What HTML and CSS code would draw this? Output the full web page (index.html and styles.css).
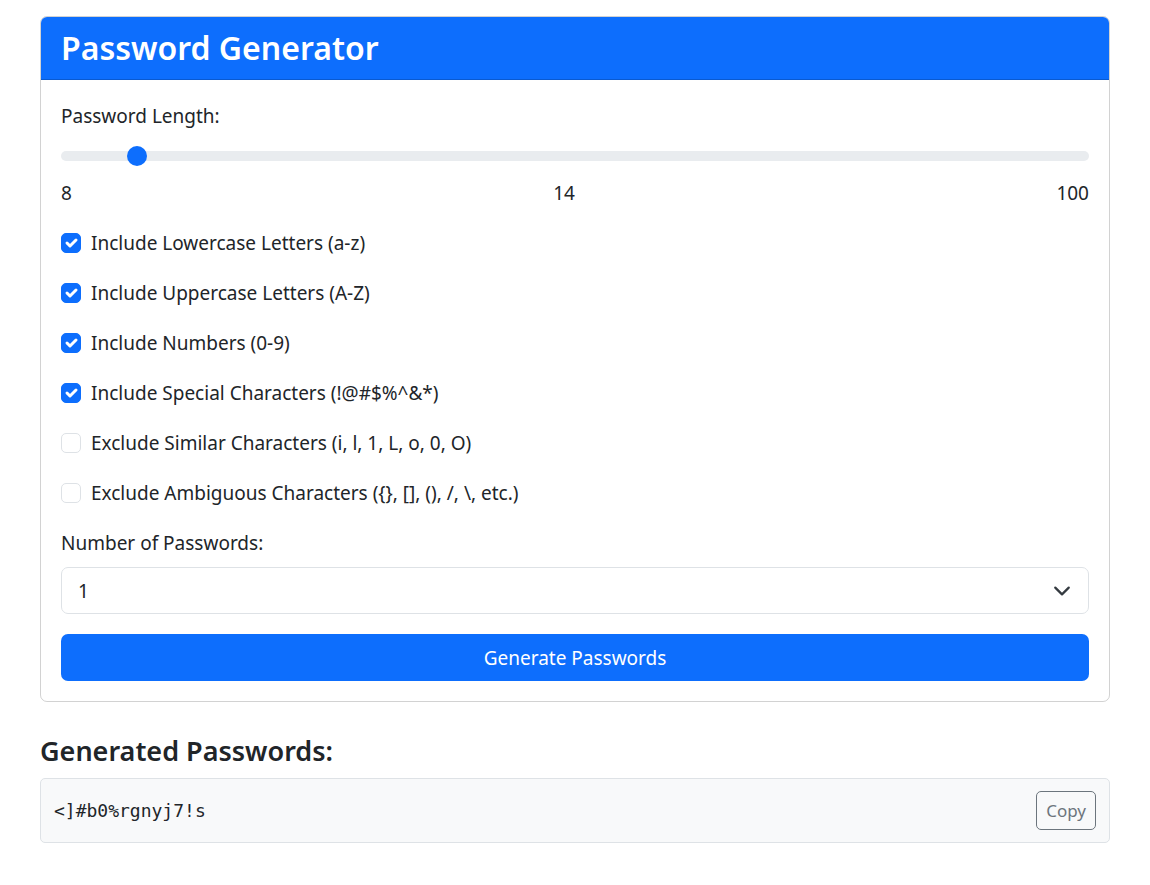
FILE: index.html
```html
<!DOCTYPE html>
<html lang="en">
<head>
<meta charset="utf-8">
<title>Password Generator</title>
<link rel="stylesheet" href="styles.css">
</head>
<body>
<main class="page">
  <section class="card">
    <header class="card-header">
      <h2 class="card-title">Password Generator</h2>
    </header>
    <div class="card-body">
      <label class="field-label" for="len">Password Length:</label>
      <input class="range" id="len" type="range" min="8" max="100" value="14">
      <div class="scale">
        <span>8</span>
        <span>14</span>
        <span>100</span>
      </div>

      <div class="check-row">
        <span class="check on"><svg viewBox="0 0 20 20" width="20" height="20"><path d="m6 10 3 3 6-6" fill="none" stroke="#fff" stroke-width="3" stroke-linecap="round" stroke-linejoin="round"/></svg></span>
        <span class="check-label">Include Lowercase Letters (a-z)</span>
      </div>
      <div class="check-row">
        <span class="check on"><svg viewBox="0 0 20 20" width="20" height="20"><path d="m6 10 3 3 6-6" fill="none" stroke="#fff" stroke-width="3" stroke-linecap="round" stroke-linejoin="round"/></svg></span>
        <span class="check-label">Include Uppercase Letters (A-Z)</span>
      </div>
      <div class="check-row">
        <span class="check on"><svg viewBox="0 0 20 20" width="20" height="20"><path d="m6 10 3 3 6-6" fill="none" stroke="#fff" stroke-width="3" stroke-linecap="round" stroke-linejoin="round"/></svg></span>
        <span class="check-label">Include Numbers (0-9)</span>
      </div>
      <div class="check-row">
        <span class="check on"><svg viewBox="0 0 20 20" width="20" height="20"><path d="m6 10 3 3 6-6" fill="none" stroke="#fff" stroke-width="3" stroke-linecap="round" stroke-linejoin="round"/></svg></span>
        <span class="check-label">Include Special Characters (!@#$%^&amp;*)</span>
      </div>
      <div class="check-row">
        <span class="check"></span>
        <span class="check-label">Exclude Similar Characters (i, l, 1, L, o, 0, O)</span>
      </div>
      <div class="check-row">
        <span class="check"></span>
        <span class="check-label">Exclude Ambiguous Characters ({}, [], (), /, \, etc.)</span>
      </div>

      <div class="field-label field-label-tight">Number of Passwords:</div>
      <div class="select">
        <span>1</span>
        <svg class="chevron" viewBox="0 0 16 16" width="18" height="18"><path d="m2 5 6 6 6-6" fill="none" stroke="#343a40" stroke-width="2" stroke-linecap="round" stroke-linejoin="round"/></svg>
      </div>
      <button class="btn-primary" type="button">Generate Passwords</button>
    </div>
  </section>

  <h4 class="results-title">Generated Passwords:</h4>
  <div class="result">
    <code class="pw">&lt;]#b0%rgnyj7!s</code>
    <button class="btn-copy" type="button">Copy</button>
  </div>
</main>
</body>
</html>
```

FILE: styles.css
```css
* { box-sizing: border-box; }

body {
  margin: 0;
  font-family: "Noto Sans", "Open Sans", sans-serif;
  font-size: 19px;
  line-height: 30px;
  color: #212529;
  background: #fff;
}

.page {
  padding: 16px 40px;
}

.card {
  border: 1.25px solid rgba(0, 0, 0, 0.175);
  border-radius: 7px;
  overflow: hidden;
}

.card-header {
  background: #0d6efd;
  color: #fff;
  padding: 10px 20px;
  border-bottom: 1px solid rgba(0, 0, 0, 0.175);
}

.card-title {
  margin: 0;
  font-size: 32px;
  font-weight: 600;
  line-height: 42px;
}

.card-body {
  padding: 21px 20px 20px;
  display: flex;
  flex-direction: column;
}

.field-label {
  display: block;
  margin-bottom: 10px;
}
.field-label-tight {
  margin-bottom: 9px;
}

.range {
  -webkit-appearance: none;
  appearance: none;
  width: 100%;
  height: 30px;
  margin: 0 0 7px;
  padding: 0;
  background: transparent;
}
.range::-webkit-slider-runnable-track {
  height: 10px;
  background: #e9ecef;
  border-radius: 10px;
}
.range::-webkit-slider-thumb {
  -webkit-appearance: none;
  appearance: none;
  width: 20px;
  height: 20px;
  margin-top: -5px;
  border-radius: 50%;
  background: #0d6efd;
  border: 0;
}

.scale {
  display: flex;
  justify-content: space-between;
  margin-bottom: 20px;
}

.check-row {
  display: flex;
  align-items: flex-start;
  gap: 10px;
  min-height: 30px;
  margin-bottom: 20px;
}

.check {
  flex: none;
  width: 20px;
  height: 20px;
  margin-top: 5px;
  border: 1.25px solid #dee2e6;
  border-radius: 5px;
  background: #fff;
  display: flex;
  align-items: center;
  justify-content: center;
}
.check.on {
  background: #0d6efd;
  border-color: #0d6efd;
}
.check svg { display: block; flex: none; }

.select {
  display: flex;
  align-items: center;
  justify-content: space-between;
  height: 47px;
  padding: 0 17px 0 16px;
  border: 1.25px solid #dee2e6;
  border-radius: 7px;
  margin-bottom: 20px;
}
.chevron { display: block; }

.btn-primary {
  display: block;
  width: 100%;
  height: 47px;
  border: 0;
  border-radius: 7px;
  background: #0d6efd;
  color: #fff;
  font: inherit;
  cursor: pointer;
}

.results-title {
  margin: 31px 0 10px;
  font-size: 27px;
  font-weight: 600;
  line-height: 35px;
}

.result {
  display: flex;
  align-items: center;
  justify-content: space-between;
  height: 65px;
  padding: 0 13px;
  background: #f8f9fa;
  border: 1.25px solid #dee2e6;
  border-radius: 5px;
}

.pw {
  font-family: "DejaVu Sans Mono", "Liberation Mono", monospace;
  font-size: 18px;
  color: #212529;
}

.btn-copy {
  height: 39px;
  padding: 0 9px;
  border: 1.25px solid #6c757d;
  border-radius: 5px;
  background: transparent;
  color: #6c757d;
  font-family: inherit;
  font-size: 17px;
  line-height: 26px;
}
```
